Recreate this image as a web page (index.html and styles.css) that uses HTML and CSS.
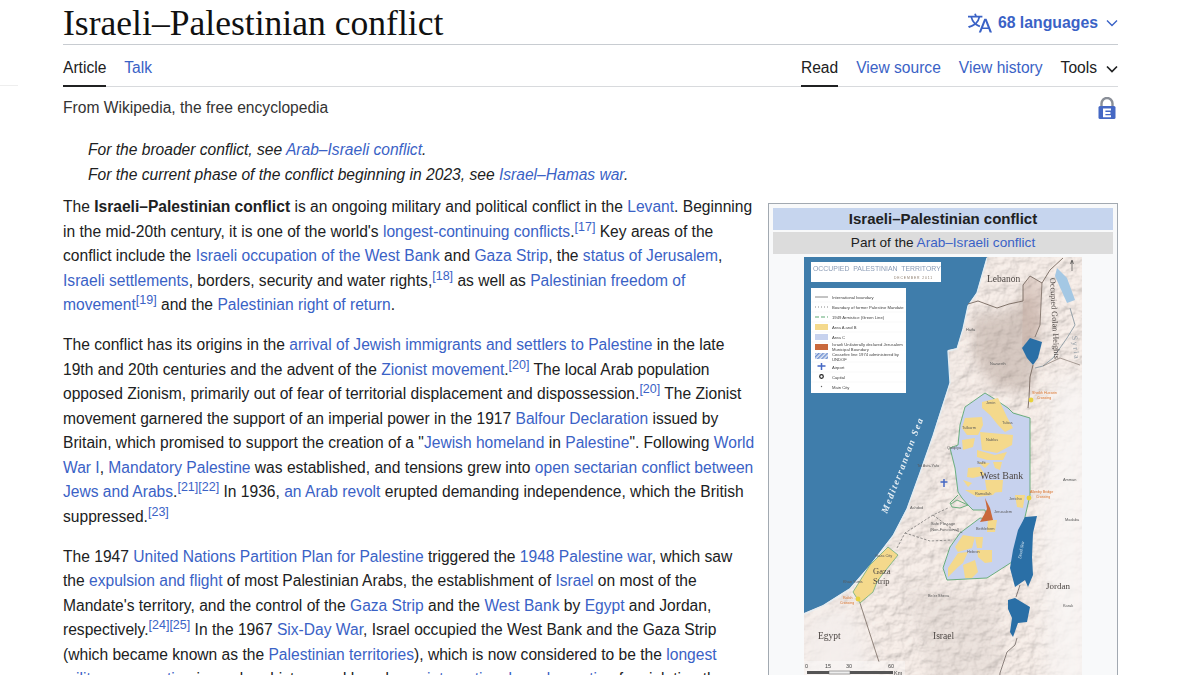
FILE: index.html
```html
<!DOCTYPE html>
<html lang="en">
<head>
    <meta charset="UTF-8">
    <title>Israeli–Palestinian conflict</title>
    <link rel="stylesheet" href="styles.css">
</head>
<body>
    <div class="side-line"></div>
    <div class="page">
        <header class="title-row">
            <h1>Israeli–Palestinian conflict</h1>
            <a class="lang-btn" href="#">
                <svg class="lang-icon" viewBox="0 0 20 20" width="24" height="24"><path fill="currentColor" d="M20 18h-1.44a.6.6 0 0 1-.4-.12.8.8 0 0 1-.23-.31L17 15h-5l-1 2.54a.8.8 0 0 1-.22.3.6.6 0 0 1-.4.14H9l4.55-11.47h1.89zm-3.53-4.31L14.89 9.5a12 12 0 0 1-.39-1.24q-.09.37-.19.69l-.19.56-1.58 4.19zm-6.3-1.58a13.4 13.4 0 0 1-2.91-1.41 11.46 11.46 0 0 0 2.81-5.37H12V4H7.31a4 4 0 0 0-.2-.56C6.87 2.79 6.6 2 6.6 2l-1.47.5s.4.89.6 1.5H0v1.33h2.15A11.23 11.23 0 0 0 5 10.7a17.2 17.2 0 0 1-5 2.1q.56.82.87 1.38a23.3 23.3 0 0 0 5.22-2.51 15.6 15.6 0 0 0 3.56 1.77zM3.63 5.33h4.91a8.1 8.1 0 0 1-2.45 4.45 9.1 9.1 0 0 1-2.46-4.45"/></svg>
                <span>68 languages</span>
                <svg class="chev" viewBox="0 0 12 8" width="12" height="8"><path d="M1 1.5l5 5 5-5" fill="none" stroke="currentColor" stroke-width="1.4"/></svg>
            </a>
        </header>

        <nav class="tabs">
            <div class="tab-group">
                <a class="tab active" href="#">Article</a>
                <a class="tab" href="#">Talk</a>
            </div>
            <div class="tab-group">
                <a class="tab active" href="#">Read</a>
                <a class="tab" href="#">View source</a>
                <a class="tab" href="#">View history</a>
                <a class="tab tools" href="#">Tools
                    <svg viewBox="0 0 12 8" width="12" height="8"><path d="M1 1.5l5 5 5-5" fill="none" stroke="currentColor" stroke-width="1.7"/></svg>
                </a>
            </div>
        </nav>

        <div class="tagline-row">
            <span>From Wikipedia, the free encyclopedia</span>
            <svg class="lock" viewBox="0 0 18 22" width="18" height="22">
                <path d="M3.500 10V6.500a5.500 5.500 0 0 1 11 0V10" fill="none" stroke="#8a8f98" stroke-width="2.4"/>
                <rect x="0.5" y="9" width="17" height="13" rx="1.5" fill="#4568c4"/>
                <path d="M5 11.500h8v2H7.400v1.600h5v1.800h-5v1.400H13v1.900H5z" fill="#fff"/>
            </svg>
        </div>

        <div class="hatnotes">
            <div>For the broader conflict, see <a href="#">Arab–Israeli conflict</a>.</div>
            <div>For the current phase of the conflict beginning in 2023, see <a href="#">Israel–Hamas war</a>.</div>
        </div>

        <div class="article">
            <aside class="infobox">
                <div class="infobox-title">Israeli–Palestinian conflict</div>
                <div class="infobox-sub">Part of the <a href="#">Arab–Israeli conflict</a></div>
                <svg class="map" viewBox="0 0 278 440" width="278" height="440">
                    <defs>
                        <filter id="relief" x="0" y="0" width="100%" height="100%">
                            <feTurbulence type="fractalNoise" baseFrequency="0.07 0.09" numOctaves="5" seed="11" result="n"/>
                            <feDiffuseLighting in="n" surfaceScale="2.6" diffuseConstant="1.2" lighting-color="#efe6e1">
                                <feDistantLight azimuth="225" elevation="62"/>
                            </feDiffuseLighting>
                        </filter>
                        <filter id="soft"><feGaussianBlur stdDeviation="6"/></filter>
                        <filter id="soft2"><feGaussianBlur stdDeviation="11"/></filter>
                        <pattern id="hatch" width="3" height="3" patternUnits="userSpaceOnUse" patternTransform="rotate(45)">
                            <rect width="3" height="3" fill="#dfe6f4"/><rect width="1.4" height="3" fill="#6d8fd0"/>
                        </pattern>
                    </defs>

                    <!-- land -->
                    <rect width="278" height="440" fill="#e2d9d4"/>
                    <rect width="278" height="440" filter="url(#relief)" opacity="0.75"/>
                    <g filter="url(#soft)">
                        <path d="M170 60 L205 55 L228 30 L236 70 L226 135 L190 130 L170 100Z" fill="#a08b82" opacity="0.38"/>
                        <path d="M100 330 L190 340 L200 420 L130 430Z" fill="#b9aba4" opacity="0.18"/>
                    </g>
                    <path d="M219 28 L226 19 L238 26 L236 68 L231 80 L218 90 L219 44Z" fill="#c2a79b" opacity="0.35"/>
                    <g filter="url(#soft2)">
                        <path d="M0 360 L48 345 L70 420 L0 440Z" fill="#f3eeec" opacity="0.95"/>
                        <path d="M250 120 L290 120 L290 440 L245 440 L238 260Z" fill="#f8f6f5" opacity="0.85"/>
                        <path d="M140 100 L155 100 L110 260 L85 280Z" fill="#ece5e1" opacity="0.7"/>
                    </g>

                    <!-- sea -->
                    <path d="M0 0 L183 0 L173 35 L164 48 L159 71 L153 91 L144 93 L146 125 L133 165 L129 178 L116 215 L103 251 L89 278 L66 308 L46 331 L19 348 L0 356Z" fill="#3f7dab"/>
                    <path d="M0 357 L19 349 L46 332 L66 309 L89 279 L103 252 L116 216 L129 179 L146 126 L144 94 L153 92 L159 72 L164 49 L173 36 L183 1" fill="none" stroke="#e3edf3" stroke-width="1.3"/>

                    <!-- borders -->
                    <path d="M164 47 L174 44 L193 51 L205 47 L219 44 L219 28 L226 19 L238 26 L246 13 L259 1" fill="none" stroke="#76685f" stroke-width="0.9"/>
                    <path d="M238 26 L236 68 L231 80" fill="none" stroke="#76685f" stroke-width="0.8"/>
                    <path d="M229 108 L226 120 L225 141 L224 151" fill="none" stroke="#76685f" stroke-width="0.9"/>
                    <path d="M266 51 L271 68 L263 81 L249 101 L239 109 L231 111" fill="none" stroke="#8b9aa3" stroke-width="0.9"/>
                    <path d="M239 109 L256 101 L276 108" fill="none" stroke="#76685f" stroke-width="0.6"/>
                    <path d="M56 346 L75 405" fill="none" stroke="#76685f" stroke-width="0.8"/>
                    <path d="M213 381 L211 388 L203 395 L196 416 L194 440" fill="none" stroke="#5f5550" stroke-width="0.7"/>
                    <path d="M216 328 L212 340" fill="none" stroke="#5f5550" stroke-width="0.7"/>

                    <!-- north arrow -->
                    <path d="M268 14V4M266.500 7L268 3L269.500 7" fill="none" stroke="#333" stroke-width="0.6"/>

                    <!-- west bank -->
                    <path d="M181 136 L161 150 L156 168 L154 188 L146 191 L151 211 L154 235 L158 241 L164 248 L169 253 L181 253 L183 262 L176 261 L156 276 L146 290 L139 311 L143 323 L183 321 L208 305 L221 260 L226 238 L226 161 L209 156 L204 151 L189 141Z" fill="#c7d2ee" stroke="#5da873" stroke-width="0.9"/>
                    <g fill="#f4d98c">
                        <path d="M161 161 L178 160 L179 168 L174 178 L163 178 L158 171Z"/>
                        <path d="M178 145 L194 141 L203 160 L209 171 L201 175 L194 168 L186 158 L178 151Z"/>
                        <path d="M176 175 L209 178 L208 188 L193 196 L178 193Z"/>
                        <path d="M158 183 L171 181 L169 190 L159 193Z"/>
                        <path d="M173 193 L191 198 L203 195 L199 203 L183 203 L173 200Z"/>
                        <path d="M164 211 L176 210 L181 218 L169 221 L163 220Z"/>
                        <path d="M174 205 L186 206 L181 211Z"/>
                        <path d="M189 205 L198 205 L196 213 L191 211Z"/>
                        <path d="M181 223 L199 223 L198 235 L183 236Z"/>
                        <path d="M159 223 L168 226 L164 230Z"/>
                        <path d="M161 233 L193 233 L189 238 L173 240Z"/>
                        <path d="M211 238 L221 238 L219 251 L213 250Z"/>
                        <path d="M184 263 L193 263 L191 275 L183 275Z"/>
                        <path d="M159 278 L171 280 L168 291 L154 295 L151 290Z"/>
                        <path d="M171 280 L179 280 L178 291 L173 291Z"/>
                        <path d="M173 293 L188 293 L188 305 L181 306 L174 300Z"/>
                        <path d="M154 296 L164 295 L159 306 L154 310 L144 320 L144 311Z"/>
                        <path d="M159 308 L171 303 L174 315 L168 321 L161 321Z"/>
                    </g>
                    <path d="M154 238 L146 246 L148 250 L156 251 L164 248 L153 243 L147 247" fill="none" stroke="#5da873" stroke-width="0.9"/>
                    <path d="M181 241 L186 251 L189 263 L176 265 L181 256 L183 252Z" fill="#c9693c"/>

                    <!-- gaza -->
                    <path d="M84 290 L94 298 L78 318 L73 325 L69 335 L56 346 L49 335 L66 308Z" fill="#f4d98c" stroke="#5da873" stroke-width="0.7"/>

                    <!-- safe passage -->
                    <path d="M93 291 L101 276 L129 258 L144 251 M129 258 L148 272 L159 276 M101 276 L126 284 L148 283" fill="none" stroke="#555" stroke-width="0.6" stroke-dasharray="2.5 1.5"/>

                    <!-- water -->
                    <path d="M221 260 L233 259 L229 276 L228 300 L229 318 L224 330 L221 323 L211 330 L206 311 L209 293 L214 273Z" fill="#2a6fa6"/>
                    <path d="M204 343 L211 341 L226 350 L223 365 L214 366 L209 380 L206 375 L208 361 L204 352Z" fill="#2a6fa6"/>
                    <path d="M218 91 L226 81 L238 85 L234 101 L229 108 L223 101Z" fill="#2a6fa6"/>
                    <path d="M253 11 L263 21 L271 43 L263 46 L251 19Z" fill="#a4c8e4"/>

                    <!-- legend -->
                    <rect x="7" y="5" width="130" height="20" fill="#fff"/>
                    <text class="m-head" x="9" y="13.500">OCCUPIED  PALESTINIAN  TERRITORY</text>
                    <text class="m-date" x="90" y="21.500">DECEMBER 2011</text>
                    <rect x="7" y="31" width="95" height="105" fill="#fff"/>
                    <g class="m-key">
                        <path d="M11 40h13" stroke="#888" fill="none"/>
                        <path d="M11 50h13" stroke="#888" stroke-dasharray="1 2" fill="none"/>
                        <path d="M11 60h13" stroke="#5da873" stroke-dasharray="4 2" stroke-width="1.2" fill="none"/>
                        <rect x="11" y="67" width="13" height="6" fill="#f4d98c"/>
                        <rect x="11" y="77" width="13" height="6" fill="#c7d2ee"/>
                        <rect x="11" y="87" width="13" height="6" fill="#c9693c"/>
                        <rect x="11" y="96" width="13" height="6" fill="url(#hatch)"/>
                        <path d="M17.500 106v7M13.500 109h8" stroke="#4568c4" stroke-width="1.5" fill="none"/>
                        <circle cx="17.500" cy="119.500" r="1.800" fill="none" stroke="#222" stroke-width="1.2"/>
                        <circle cx="17.500" cy="129.500" r="0.700" fill="#666"/>
                        <path d="M7 45h95M7 55h95M7 65h95M7 75h95M7 85h95M7 105h95M7 115h95M7 125h95" stroke="#eee" stroke-width="0.4" fill="none"/>
                        <text x="28" y="41.500">International boundary</text>
                        <text x="28" y="51.500">Boundary of former Palestine Mandate</text>
                        <text x="28" y="61.500">1949 Armistice (Green Line)</text>
                        <text x="28" y="71.500">Area A and B</text>
                        <text x="28" y="81.500">Area C</text>
                        <text x="28" y="89">Israeli Unilaterally declared Jerusalem</text>
                        <text x="28" y="94">Municipal Boundary</text>
                        <text x="28" y="99">Ceasefire line 1974 administered by</text>
                        <text x="28" y="104">UNDOF</text>
                        <text x="28" y="111.500">Airport</text>
                        <text x="28" y="121.500">Capital</text>
                        <text x="28" y="131.500">Main City</text>
                    </g>

                    <!-- place names -->
                    <text class="m-name" x="183" y="25" font-size="9.5">Lebanon</text>
                    <text class="m-name" font-size="8.2" transform="translate(246 21) rotate(87)">Occupied Golan Heights</text>
                    <text class="m-syria" transform="translate(268 79) rotate(84)">Syria</text>
                    <text class="m-sea" transform="translate(83 257) rotate(-69)">Mediterranean Sea</text>
                    <text class="m-name" x="176" y="222" font-size="10">West Bank</text>
                    <text class="m-name" x="69" y="317" font-size="8.5">Gaza</text>
                    <text class="m-name" x="69" y="327" font-size="8.5">Strip</text>
                    <text class="m-name" x="242" y="332" font-size="9">Jordan</text>
                    <text class="m-name" x="14" y="382" font-size="9.5">Egypt</text>
                    <text class="m-name" x="129" y="382" font-size="9.5">Israel</text>
                    <text class="m-water" transform="translate(217 302) rotate(-80)">Dead Sea</text>
                    <g class="m-city">
                        <text x="162" y="74">Haifa</text>
                        <text x="186" y="108">Nazareth</text>
                        <text x="182" y="147">Jenin</text>
                        <text x="198" y="167">Tubas</text>
                        <text x="182" y="184">Nablus</text>
                        <text x="173" y="207">Salfit</text>
                        <text x="143" y="192">Qalqilya</text>
                        <text x="158" y="172">Tulkarm</text>
                        <text x="113" y="210">Tel Aviv-Yafo</text>
                        <text x="171" y="238">Ramallah</text>
                        <text x="190" y="256">Jerusalem</text>
                        <text x="172" y="273">Bethlehem</text>
                        <text x="163" y="296">Hebron</text>
                        <text x="205" y="243">Jericho</text>
                        <text x="106" y="252">Ashdod</text>
                        <text x="71" y="300">Gaza City</text>
                        <text x="39" y="326">Khan Yunis</text>
                        <text x="124" y="340">Be'er Sheva</text>
                        <text x="259" y="224" fill="#333">Amman</text>
                        <text x="261" y="264">Madaba</text>
                        <text x="259" y="350">Karak</text>
                        <text x="127" y="268">Safe Passage</text>
                        <text x="126" y="274">(Non-Functional)</text>
                    </g>
                    <text class="m-cross" x="228" y="137">Sheikh Hussein</text>
                    <text class="m-cross" x="233" y="142">Crossing</text>
                    <text class="m-cross" x="226" y="236">Allenby Bridge</text>
                    <text class="m-cross" x="232" y="241">Crossing</text>
                    <text class="m-cross" x="39" y="342">Rafah</text>
                    <text class="m-cross" x="36" y="347">Crossing</text>
                    <circle cx="227" cy="143" r="2.4" fill="#e8d23c"/>
                    <circle cx="225" cy="241" r="2.4" fill="#e8d23c"/>
                    <circle cx="54" cy="342" r="2.4" fill="#e8d23c"/>
                    <path d="M140 222v8M136.500 225h7" stroke="#4568c4" stroke-width="1.5" fill="none"/>

                    <!-- scale -->
                    <rect x="0" y="404" width="101" height="36" fill="#fff" opacity="0.35"/>
                    <g class="m-scale">
                        <text x="1" y="411">0</text>
                        <text x="21" y="411">15</text>
                        <text x="42" y="411">30</text>
                        <text x="84" y="411">60</text>
                        <text x="90" y="418">Km</text>
                    </g>
                    <rect x="3" y="414" width="22" height="3" fill="#555"/>
                    <rect x="25" y="414" width="21" height="3" fill="#eee" stroke="#555" stroke-width="0.5"/>
                    <rect x="46" y="414" width="43" height="3" fill="#555"/>
                </svg>
            </aside>

            <p>The <b>Israeli–Palestinian conflict</b> is an ongoing military and political conflict in the <a href="#">Levant</a>. Beginning in the mid-20th century, it is one of the world's <a href="#">longest-continuing conflicts</a>.<sup><a href="#">[17]</a></sup> Key areas of the conflict include the <a href="#">Israeli occupation of the West Bank</a> and <a href="#">Gaza Strip</a>, the <a href="#">status of Jerusalem</a>, <a href="#">Israeli settlements</a>, borders, security and water rights,<sup><a href="#">[18]</a></sup> as well as <a href="#">Palestinian freedom of movement</a><sup><a href="#">[19]</a></sup> and the <a href="#">Palestinian right of return</a>.</p>

            <p>The conflict has its origins in the <a href="#">arrival of Jewish immigrants and settlers to Palestine</a> in the late 19th and 20th centuries and the advent of the <a href="#">Zionist movement</a>.<sup><a href="#">[20]</a></sup> The local Arab population opposed Zionism, primarily out of fear of territorial displacement and dispossession.<sup><a href="#">[20]</a></sup> The Zionist movement garnered the support of an imperial power in the 1917 <a href="#">Balfour Declaration</a> issued by Britain, which promised to support the creation of a "<a href="#">Jewish homeland</a> in <a href="#">Palestine</a>". Following <a href="#">World War I</a>, <a href="#">Mandatory Palestine</a> was established, and tensions grew into <a href="#">open sectarian conflict between Jews and Arabs</a>.<sup><a href="#">[21]</a></sup><sup><a href="#">[22]</a></sup> In 1936, <a href="#">an Arab revolt</a> erupted demanding independence, which the British suppressed.<sup><a href="#">[23]</a></sup></p>

            <p>The 1947 <a href="#">United Nations Partition Plan for Palestine</a> triggered the <a href="#">1948 Palestine war</a>, which saw the <a href="#">expulsion and flight</a> of most Palestinian Arabs, the establishment of <a href="#">Israel</a> on most of the Mandate's territory, and the control of the <a href="#">Gaza Strip</a> and the <a href="#">West Bank</a> by <a href="#">Egypt</a> and Jordan, respectively.<sup><a href="#">[24]</a></sup><sup><a href="#">[25]</a></sup> In the 1967 <a href="#">Six-Day War</a>, Israel occupied the West Bank and the Gaza Strip (which became known as the <a href="#">Palestinian territories</a>), which is now considered to be the <a href="#">longest military occupation</a> in modern history and has drawn <a href="#">international condemnation</a> for violating the</p>
        </div>
    </div>
</body>
</html>
```

FILE: styles.css
```css
html, body {
    height: 675px;
    overflow: hidden;
}

body {
    margin: 0;
    padding: 0;
    font-family: "Liberation Sans", Arial, sans-serif;
    font-size: 15.6px;
    line-height: 24.5px;
    color: #202122;
    background-color: #fff;
}

a {
    color: #3a62c6;
    text-decoration: none;
}

/* Leftover edge of the sidebar */
.side-line {
    position: absolute;
    top: 85px;
    left: 0;
    width: 18px;
    height: 1px;
    background: #eee;
}

.page {
    width: 1055px;
    margin-left: 63px;
}

.title-row {
    display: flex;
    justify-content: space-between;
    align-items: center;
    height: 42px;
    padding-top: 2px;
    border-bottom: 1px solid #c8ccd1;
}

h1 {
    margin: 0;
    font-family: "Liberation Serif", Georgia, serif;
    font-weight: 400;
    font-size: 35.6px;
    line-height: 40px;
    color: #111;
}

.lang-btn {
    display: flex;
    align-items: center;
    gap: 6px;
    font-size: 15.8px;
    font-weight: 700;
}

.chev {
    margin-left: 2px;
}

.tabs {
    display: flex;
    justify-content: space-between;
    height: 41px;
    border-bottom: 1px solid #d8dadd;
}

.tab-group {
    display: flex;
    gap: 18px;
}

.tab {
    display: flex;
    align-items: center;
    height: 41px;
    gap: 8px;
    padding-top: 6px;
    box-sizing: border-box;
}

.tab.active {
    color: #202122;
    border-bottom: 2px solid #202122;
    height: 42px;
    padding-top: 7px;
}

.tab.tools {
    color: #202122;
    gap: 9px;
}

.tagline-row {
    display: flex;
    justify-content: space-between;
    align-items: center;
    height: 42px;
    color: #333;
}

.lock {
    margin-right: 2px;
}

.hatnotes {
    margin-top: 9px;
    padding-left: 25px;
    font-style: italic;
}

.article {
    margin-top: 8px;
}

.article p {
    margin: 0 0 15.5px;
}

sup {
    font-size: 12.5px;
    line-height: 0;
    vertical-align: 6px;
}

.infobox {
    float: right;
    box-sizing: border-box;
    width: 350px;
    height: 600px;
    margin: 8px 0 0 12.5px;
    padding: 4px;
    border: 1px solid #a2a9b1;
    background: #f8f9fa;
    font-size: 13.6px;
    line-height: 22px;
    text-align: center;
}

.infobox-title {
    background: #c6d5ee;
    font-size: 15px;
    font-weight: 700;
    margin-bottom: 2px;
}

.infobox-sub {
    background: #dcdcdc;
    margin-bottom: 3px;
}

.map {
    display: block;
    margin: 0 auto;
}

.map text {
    font-family: "Liberation Serif", serif;
}

.map .m-head {
    font-family: "Liberation Sans", sans-serif;
    font-size: 6.9px;
    fill: #8a9bb5;
    white-space: pre;
}

.map .m-date {
    font-family: "Liberation Sans", sans-serif;
    font-size: 3.4px;
    letter-spacing: 0.9px;
    fill: #8a7a6a;
}

.map .m-key text {
    font-family: "Liberation Sans", sans-serif;
    font-size: 4.2px;
    fill: #444;
}

.m-name {
    fill: #4d4744;
}

.m-syria {
    font-size: 8px;
    letter-spacing: 1.5px;
    fill: #97a0a8;
}

.m-sea {
    font-size: 9.5px;
    font-style: italic;
    font-weight: 700;
    letter-spacing: 1.6px;
    fill: #e8f0f5;
}

.m-water {
    font-size: 4.5px;
    font-style: italic;
    fill: #d5e4ef;
}

.map .m-city text {
    font-family: "Liberation Sans", sans-serif;
    font-size: 3.9px;
    fill: #5a5a5a;
}

.map .m-cross {
    font-family: "Liberation Sans", sans-serif;
    font-size: 3.6px;
    fill: #d9722a;
}

.map .m-scale text {
    font-family: "Liberation Sans", sans-serif;
    font-size: 5.5px;
    fill: #444;
}
```
